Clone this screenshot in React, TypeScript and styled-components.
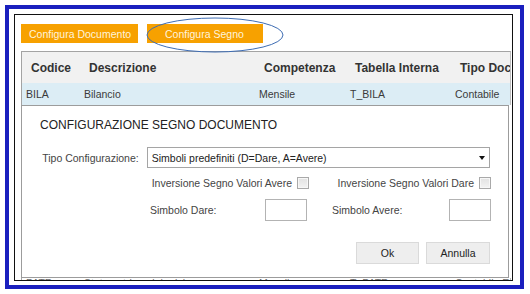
import styled, { createGlobalStyle } from 'styled-components';

const GlobalStyle = createGlobalStyle`
  html, body {
    margin: 0;
    padding: 0;
    background: #ffffff;
  }
  body {
    font-family: "Liberation Sans", Arial, sans-serif;
    font-size: 10.5px;
    color: #2b2b2b;
  }
`;

const BlueFrame = styled.div`
  box-sizing: border-box;
  width: 519px;
  height: 284px;
  margin: 5px 0 0 5px;
  border: 4px solid #1a1fbe;
  padding: 5px 0 0 5px;
`;

const AppArea = styled.div`
  box-sizing: border-box;
  width: 499px;
  height: 267px;
  border: 1px solid #111111;
  overflow: hidden;
  background: #ffffff;
`;

const Toolbar = styled.div`
  position: relative;
  display: flex;
  gap: 9px;
  padding: 9px 6px 8px;
`;

const OrangeButton = styled.div<{ $width: number }>`
  box-sizing: border-box;
  width: ${p => p.$width}px;
  height: 19px;
  display: flex;
  align-items: center;
  padding-left: ${p => (p.$width > 116 ? 8 : 18)}px;
  background: #f7a100;
  color: #fff4dc;
  white-space: nowrap;
`;

const Highlight = styled.svg`
  position: absolute;
  left: 131px;
  top: 2px;
`;

const Grid = styled.div<{ $open?: boolean }>`
  box-sizing: border-box;
  margin-left: 6px;
  width: 490px;
  border-top: ${p => (p.$open ? 'none' : '1px solid #a3a3a3')};
  border-left: 1px solid #a3a3a3;
  border-right: 1px solid #bdbdbd;
  overflow: hidden;
`;

const Row = styled.div<{ $kind: 'head' | 'selected' | 'peek' }>`
  display: grid;
  grid-template-columns: 58px 175px 91px 105px 1fr;
  height: ${p => (p.$kind === 'head' ? 31 : p.$kind === 'selected' ? 22 : 12)}px;
  align-items: ${p => (p.$kind === 'peek' ? 'start' : 'center')};
  line-height: ${p => (p.$kind === 'peek' ? '10px' : 'normal')};
  background: ${p =>
    p.$kind === 'head' ? '#f1f1f1' : p.$kind === 'selected' ? '#dcedf5' : '#ffffff'};
  font-weight: ${p => (p.$kind === 'head' ? 700 : 400)};
  font-size: ${p => (p.$kind === 'head' ? 12 : 10.5)}px;
  color: ${p => (p.$kind === 'head' ? '#333333' : p.$kind === 'peek' ? '#6a6a6a' : '#3a3a3a')};
`;

const Cell = styled.div<{ $head?: boolean }>`
  padding-left: ${p => (p.$head ? 9 : 4)}px;
  white-space: nowrap;
  overflow: hidden;
`;

const Dialog = styled.div`
  box-sizing: border-box;
  margin-left: 6px;
  width: 488px;
  height: 173px;
  border: 1px solid #9c9c9c;
  background: #ffffff;
  padding: 12px 18px 0 0;
`;

const Title = styled.div`
  padding-left: 18px;
  font-size: 12px;
  line-height: 14px;
  color: #222222;
`;

const SelectRow = styled.div`
  display: flex;
  align-items: center;
  gap: 8px;
  margin-top: 15px;
`;

const FieldLabel = styled.div`
  width: 118px;
  text-align: right;
  color: #444444;
`;

const Select = styled.div`
  box-sizing: border-box;
  width: 347px;
  height: 21px;
  display: flex;
  align-items: center;
  justify-content: space-between;
  padding: 0 4px;
  border: 1px solid #a5a5a5;
  color: #222222;
`;

const Caret = styled.span`
  width: 0;
  height: 0;
  border-left: 3px solid transparent;
  border-right: 3px solid transparent;
  border-top: 4px solid #111111;
`;

const PairRow = styled.div<{ $top: number; $height: number }>`
  display: grid;
  grid-template-columns: 159px 159px;
  column-gap: 23px;
  padding-left: 128px;
  margin-top: ${p => p.$top}px;
  height: ${p => p.$height}px;
`;

const CheckCell = styled.label`
  display: flex;
  align-items: center;
  justify-content: flex-end;
  gap: 5px;
  color: #444444;
  white-space: nowrap;
`;

const CheckBox = styled.span`
  box-sizing: border-box;
  width: 12px;
  height: 12px;
  border: 1px solid #a9a9a9;
  background: linear-gradient(#e2e2e2, #f3f3f3);
  box-shadow: inset 0 0 0 1px #f7f7f7;
`;

const InputCell = styled.div`
  display: flex;
  align-items: center;
  justify-content: space-between;
  color: #444444;
  white-space: nowrap;
`;

const SmallInput = styled.span<{ $inset?: number }>`
  box-sizing: border-box;
  width: 42px;
  height: 22px;
  margin-right: ${p => p.$inset ?? 0}px;
  border: 1px solid #b3b3b3;
  background: #ffffff;
`;

const Actions = styled.div`
  display: flex;
  justify-content: flex-end;
  gap: 7px;
  margin-top: 21px;
`;

const DialogButton = styled.div<{ $width: number }>`
  box-sizing: border-box;
  width: ${p => p.$width}px;
  height: 22px;
  display: flex;
  align-items: center;
  justify-content: center;
  background: #eeeeee;
  border: 1px solid #dadada;
  color: #222222;
`;

const columns = ['Codice', 'Descrizione', 'Competenza', 'Tabella Interna', 'Tipo Documento'];
const selected = ['BILA', 'Bilancio', 'Mensile', 'T_BILA', 'Contabile'];
const hidden = ['PATR', 'Stato patrimoniale riclass.', 'Mensile', 'T_PATR', 'Contabile Extra'];

export default function App() {
  return (
    <>
      <GlobalStyle />
      <BlueFrame>
        <AppArea>
          <Toolbar>
            <OrangeButton $width={117}>Configura Documento</OrangeButton>
            <OrangeButton $width={116}>Configura Segno</OrangeButton>
            <Highlight width="138" height="36" viewBox="0 0 138 36">
              <ellipse cx="69" cy="18" rx="68" ry="17" fill="none" stroke="#3d6cb3" strokeWidth="1" />
            </Highlight>
          </Toolbar>

          <Grid>
            <Row $kind="head">
              {columns.map(c => (
                <Cell $head key={c}>{c}</Cell>
              ))}
            </Row>
            <Row $kind="selected">
              {selected.map((v, j) => (
                <Cell key={j}>{v}</Cell>
              ))}
            </Row>
          </Grid>

          <Dialog>
            <Title>CONFIGURAZIONE SEGNO DOCUMENTO</Title>

            <SelectRow>
              <FieldLabel>Tipo Configurazione:</FieldLabel>
              <Select>
                <span>Simboli predefiniti (D=Dare, A=Avere)</span>
                <Caret />
              </Select>
            </SelectRow>

            <PairRow $top={9} $height={12}>
              <CheckCell>
                Inversione Segno Valori Avere <CheckBox />
              </CheckCell>
              <CheckCell>
                Inversione Segno Valori Dare <CheckBox />
              </CheckCell>
            </PairRow>

            <PairRow $top={10} $height={22}>
              <InputCell>
                Simbolo Dare:
                <SmallInput $inset={2} />
              </InputCell>
              <InputCell>
                Simbolo Avere:
                <SmallInput />
              </InputCell>
            </PairRow>

            <Actions>
              <DialogButton $width={63}>Ok</DialogButton>
              <DialogButton $width={64}>Annulla</DialogButton>
            </Actions>
          </Dialog>

          <Grid $open>
            <Row $kind="peek">
              {hidden.map((v, j) => (
                <Cell key={j}>{v}</Cell>
              ))}
            </Row>
          </Grid>
        </AppArea>
      </BlueFrame>
    </>
  );
}
